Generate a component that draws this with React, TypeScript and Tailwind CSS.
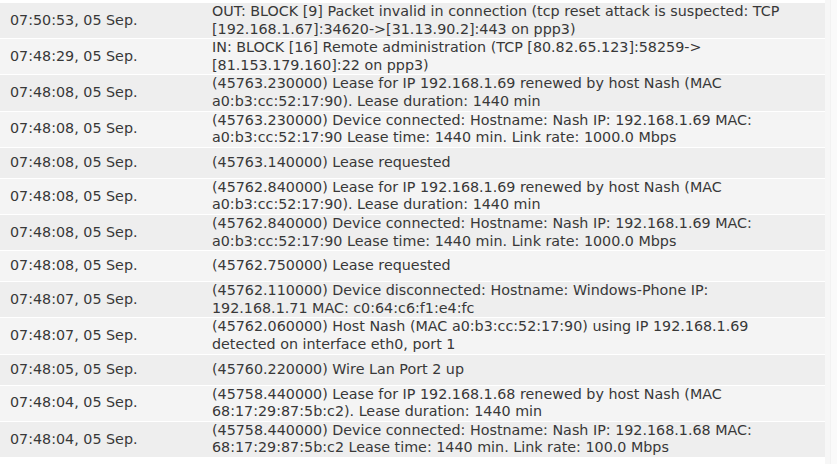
import React from "react";

const rows: { t: string; m: string[] }[] = [
  { t: "07:50:53, 05 Sep.", m: ["OUT: BLOCK [9] Packet invalid in connection (tcp reset attack is suspected: TCP", "[192.168.1.67]:34620->[31.13.90.2]:443 on ppp3)"] },
  { t: "07:48:29, 05 Sep.", m: ["IN: BLOCK [16] Remote administration (TCP [80.82.65.123]:58259->", "[81.153.179.160]:22 on ppp3)"] },
  { t: "07:48:08, 05 Sep.", m: ["(45763.230000) Lease for IP 192.168.1.69 renewed by host Nash (MAC", "a0:b3:cc:52:17:90). Lease duration: 1440 min"] },
  { t: "07:48:08, 05 Sep.", m: ["(45763.230000) Device connected: Hostname: Nash IP: 192.168.1.69 MAC:", "a0:b3:cc:52:17:90 Lease time: 1440 min. Link rate: 1000.0 Mbps"] },
  { t: "07:48:08, 05 Sep.", m: ["(45763.140000) Lease requested"] },
  { t: "07:48:08, 05 Sep.", m: ["(45762.840000) Lease for IP 192.168.1.69 renewed by host Nash (MAC", "a0:b3:cc:52:17:90). Lease duration: 1440 min"] },
  { t: "07:48:08, 05 Sep.", m: ["(45762.840000) Device connected: Hostname: Nash IP: 192.168.1.69 MAC:", "a0:b3:cc:52:17:90 Lease time: 1440 min. Link rate: 1000.0 Mbps"] },
  { t: "07:48:08, 05 Sep.", m: ["(45762.750000) Lease requested"] },
  { t: "07:48:07, 05 Sep.", m: ["(45762.110000) Device disconnected: Hostname: Windows-Phone IP:", "192.168.1.71 MAC: c0:64:c6:f1:e4:fc"] },
  { t: "07:48:07, 05 Sep.", m: ["(45762.060000) Host Nash (MAC a0:b3:cc:52:17:90) using IP 192.168.1.69", "detected on interface eth0, port 1"] },
  { t: "07:48:05, 05 Sep.", m: ["(45760.220000) Wire Lan Port 2 up"] },
  { t: "07:48:04, 05 Sep.", m: ["(45758.440000) Lease for IP 192.168.1.68 renewed by host Nash (MAC", "68:17:29:87:5b:c2). Lease duration: 1440 min"] },
  { t: "07:48:04, 05 Sep.", m: ["(45758.440000) Device connected: Hostname: Nash IP: 192.168.1.68 MAC:", "68:17:29:87:5b:c2 Lease time: 1440 min. Link rate: 100.0 Mbps"] },
];

export default function App() {
  return (
    <div
      className="w-[837px] h-[464px] bg-white flex overflow-hidden text-[14.3px] text-[#383838]"
      style={{ fontFamily: "Verdana, 'DejaVu Sans', sans-serif" }}
    >
      <div className="w-[825px] flex flex-col gap-[1px] pt-[3px]">
        {rows.map((r, i) => (
          <div
            key={i}
            className={`flex items-center min-h-[30px] whitespace-nowrap ${i % 2 === 0 ? "bg-[#eeeeee]" : "bg-[#f4f4f4]"}`}
          >
            <div className="w-[212px] pl-[10px] shrink-0">{r.t}</div>
            <div className="flex-1 leading-[17.6px]">
              {r.m.map((l, j) => (
                <div key={j}>{l}</div>
              ))}
            </div>
          </div>
        ))}
      </div>
      <div className="flex-1 flex">
        <div className="w-[5px] bg-[#f7f7f7]" />
        <div className="w-[1px] bg-[#f2f2f2]" />
        <div className="flex-1 bg-[#fafafa]" />
      </div>
    </div>
  );
}
